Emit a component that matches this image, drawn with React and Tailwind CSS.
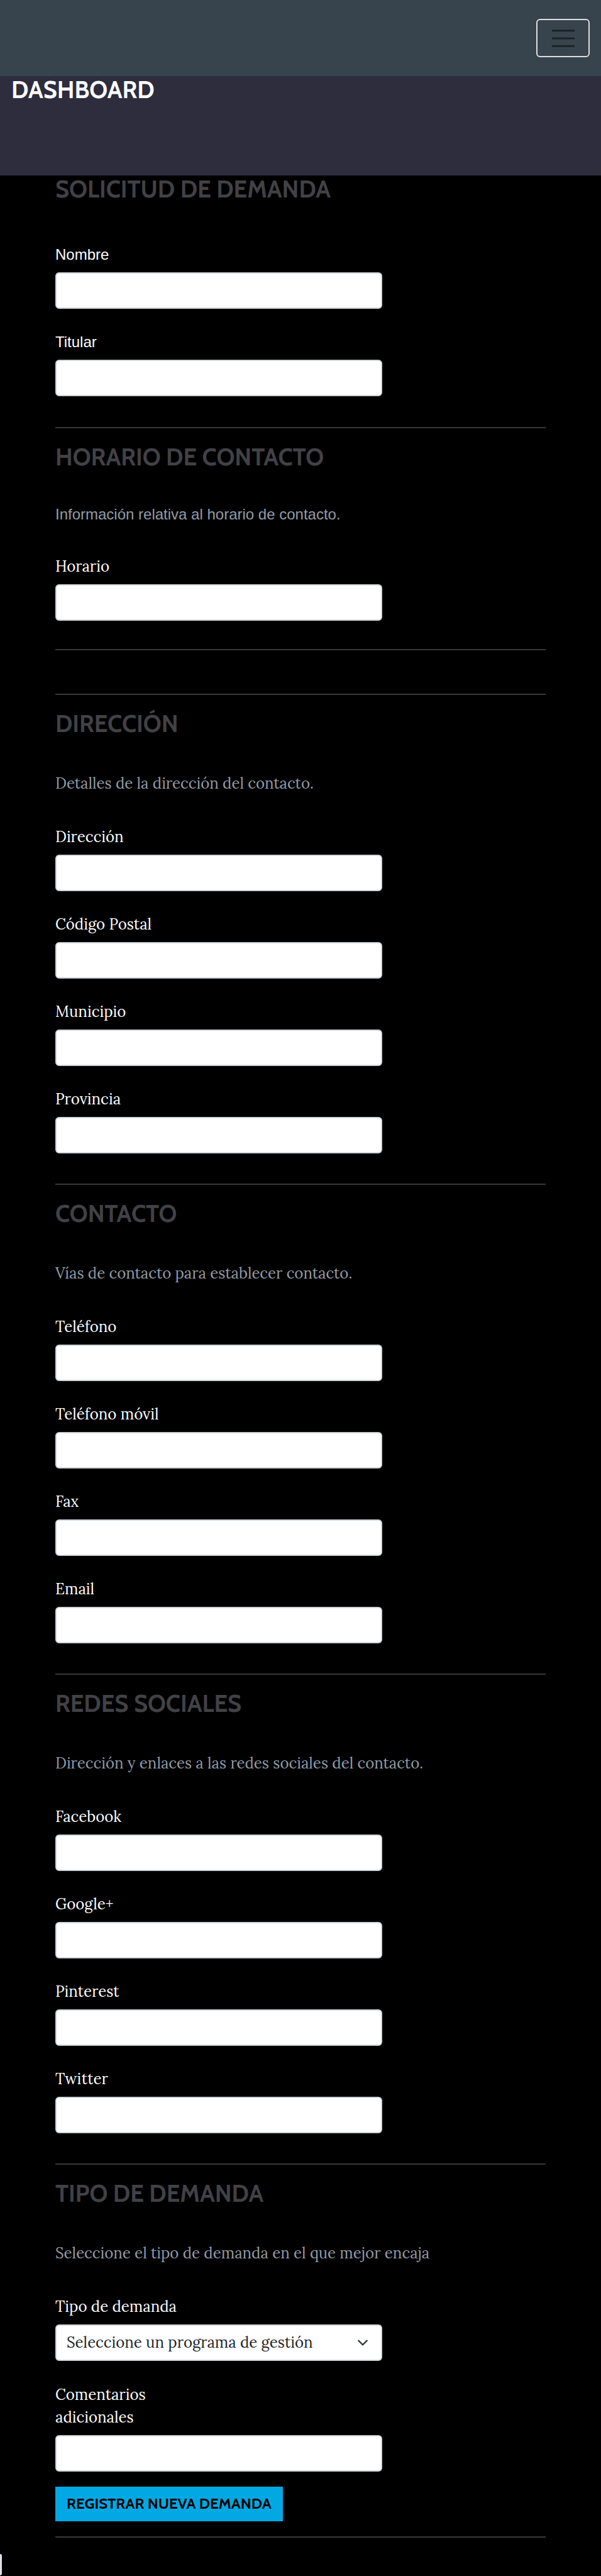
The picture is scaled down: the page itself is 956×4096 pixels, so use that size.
const serif = "font-['Lora','Liberation_Serif',serif] text-2xl leading-9";
const sans = "font-['Liberation_Sans',sans-serif] text-2xl leading-9";
const control =
  "block h-[58px] w-2/3 rounded-md border-2 border-[#ced4da] bg-white px-4 text-[#212529]";

function Title({ children }) {
  return (
    <h2 className="font-['Cabin','Lato',sans-serif] text-[38px] leading-[44px] font-bold text-[#414146]">
      {children}
    </h2>
  );
}

function Field({ id, label, font = serif }) {
  return (
    <div className="flex flex-col items-start gap-2.5">
      <label htmlFor={id} className={`${font} text-white`}>
        {label}
      </label>
      <input id={id} type="text" className={`${control} ${font}`} />
    </div>
  );
}

function Fields({ items }) {
  return (
    <div className="flex flex-col gap-[35px]">
      {items.map(([id, label]) => (
        <Field key={id} id={id} label={label} />
      ))}
    </div>
  );
}

function Section({ title, description, children }) {
  return (
    <section className="border-t-2 border-[#383838] pt-6 pb-12">
      <Title>{title}</Title>
      <p className={`${serif} mt-[55px] mb-[49px] text-[#929ba7]`}>{description}</p>
      {children}
    </section>
  );
}

export default function App() {
  return (
    <div className="bg-black">
      <nav className="flex h-[121px] items-center justify-end bg-[#38444d] px-[18px]">
        <button
          type="button"
          aria-label="Menú"
          className="flex h-[61px] w-[85px] items-center justify-center rounded-md border-2 border-[#dedede]"
        >
          <svg viewBox="0 0 30 30" className="size-[46px]" fill="none" aria-hidden="true">
            <path d="M4 7h22M4 15h22M4 23h22" stroke="#1b2226" strokeWidth="2" strokeLinecap="round" />
          </svg>
        </button>
      </nav>

      <header className="h-[158px] bg-[#2d2d3d] px-[18px]">
        <h1 className="font-['Cabin','Lato',sans-serif] text-[38px] leading-[44px] font-bold text-white">
          DASHBOARD
        </h1>
      </header>

      <form className="px-[88px]">
        <section className="pb-[49px]">
          <Title>SOLICITUD DE DEMANDA</Title>
          <div className="mt-16 flex flex-col gap-[35px]">
            <Field id="nombre" label="Nombre" font={sans} />
            <Field id="titular" label="Titular" font={sans} />
          </div>
        </section>

        <section className="border-t-2 border-[#383838] pt-6 pb-[45px]">
          <Title>HORARIO DE CONTACTO</Title>
          <p className={`${sans} mt-[51px] mb-[47px] text-[#929ba7]`}>
            Información relativa al horario de contacto.
          </p>
          <Field id="horario" label="Horario" />
        </section>

        <hr className="mb-[69px] border-t-2 border-[#383838]" />

        <Section title="DIRECCIÓN" description="Detalles de la dirección del contacto.">
          <Fields
            items={[
              ["direccion", "Dirección"],
              ["codigo-postal", "Código Postal"],
              ["municipio", "Municipio"],
              ["provincia", "Provincia"],
            ]}
          />
        </Section>

        <Section title="CONTACTO" description="Vías de contacto para establecer contacto.">
          <Fields
            items={[
              ["telefono", "Teléfono"],
              ["movil", "Teléfono móvil"],
              ["fax", "Fax"],
              ["email", "Email"],
            ]}
          />
        </Section>

        <Section
          title="REDES SOCIALES"
          description="Dirección y enlaces a las redes sociales del contacto."
        >
          <Fields
            items={[
              ["facebook", "Facebook"],
              ["google", "Google+"],
              ["pinterest", "Pinterest"],
              ["twitter", "Twitter"],
            ]}
          />
        </Section>

        <Section
          title="TIPO DE DEMANDA"
          description="Seleccione el tipo de demanda en el que mejor encaja"
        >
          <div className="flex flex-col items-start gap-2.5">
            <label htmlFor="tipo" className={`${serif} text-white`}>
              Tipo de demanda
            </label>
            <div className="relative w-full">
              <select id="tipo" className={`${control} ${serif} appearance-none`}>
                <option>Seleccione un programa de gestión</option>
              </select>
              <div className="pointer-events-none absolute inset-y-0 left-0 flex w-2/3 items-center justify-end pr-[22px]">
                <svg viewBox="0 0 16 16" className="size-[18px]" fill="none" aria-hidden="true">
                  <path
                    d="m2 5 6 6 6-6"
                    stroke="#343a40"
                    strokeWidth="2"
                    strokeLinecap="round"
                    strokeLinejoin="round"
                  />
                </svg>
              </div>
            </div>
          </div>
          <div className="mt-9 flex flex-col items-start gap-2.5">
            <label htmlFor="comentarios" className={`${serif} w-1/4 text-white`}>
              Comentarios adicionales
            </label>
            <input id="comentarios" type="text" className={`${control} ${serif}`} />
          </div>
          <button
            type="submit"
            className="mt-6 -mb-6 flex h-[55px] items-center bg-[#02a8e3] px-[18px] pb-0.5 font-['Cabin','Lato',sans-serif] text-2xl font-bold text-black"
          >
            REGISTRAR NUEVA DEMANDA
          </button>
        </Section>

        <hr className="border-t-2 border-[#383838]" />
      </form>

      <div className="pt-[26px] pb-px">
        <div className="h-[34px] w-[3px] rounded-r-sm bg-[#dee2e6]" />
      </div>
    </div>
  );
}
